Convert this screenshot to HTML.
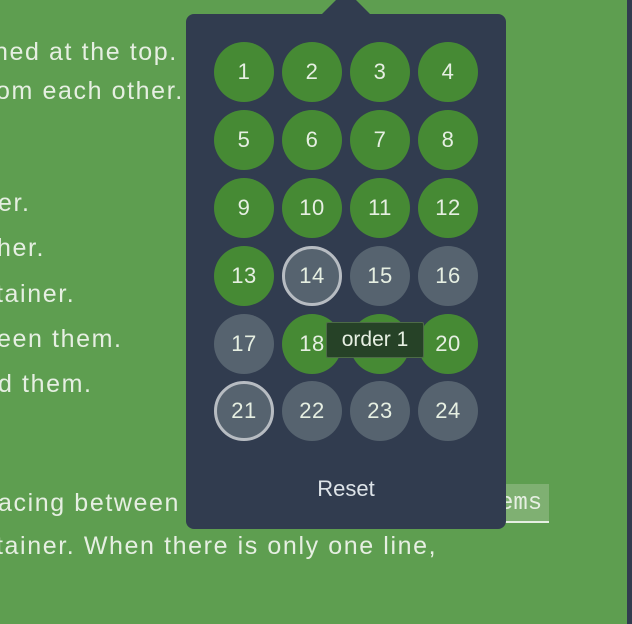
<!DOCTYPE html>
<html><head><meta charset="utf-8"><style>
html,body{margin:0;padding:0}
body{width:632px;height:624px;background:#5e9e50;position:relative;overflow:hidden;font-family:"Liberation Sans",sans-serif;color:#e6efe2}
.t{position:absolute;font-size:25px;letter-spacing:1.6px;white-space:nowrap;line-height:28px}
.strip{position:absolute;right:0;top:0;width:5px;height:624px;background:#313c4f}
.code{position:absolute;left:505px;top:484px;width:44px;height:37px;background:#7fb072;border-bottom:2px solid #e6efe2;font-family:"Liberation Mono",monospace;font-size:24px;line-height:40px;color:#e6efe2;overflow:hidden;text-indent:-6px}
.panel{position:absolute;left:186px;top:14px;width:320px;height:515px;background:#313c4f;border-radius:8px}
.arrow{position:absolute;left:322px;top:-10px;width:0;height:0;border-left:24px solid transparent;border-right:24px solid transparent;border-bottom:24px solid #313c4f}
.c{position:absolute;width:60px;height:60px;border-radius:50%;text-align:center;line-height:60px;font-size:22px;letter-spacing:0.5px;color:#e6efe2;box-sizing:border-box}
.g{background:#468a34}
.s{background:#56636f}
.r{border:3px solid #b7bcc2;line-height:54px}
.tip{position:absolute;left:326px;top:322px;width:98px;height:36px;box-sizing:border-box;background:#264227;border:1px solid #4d6b47;border-radius:2px;font-size:21px;line-height:34px;text-align:center;color:#e6efe2}
.reset{position:absolute;left:186px;width:320px;top:476px;text-align:center;font-size:22px;color:#dde3e8}
</style></head><body>
<div class="t" style="left:-6px;top:38px">hed at the top.</div>
<div class="t" style="left:-4px;top:77px">om each other.</div>
<div class="t" style="left:-2px;top:189px">er.</div>
<div class="t" style="left:-3px;top:234px">her.</div>
<div class="t" style="left:-4px;top:280px">tainer.</div>
<div class="t" style="left:-3px;top:325px">een them.</div>
<div class="t" style="left:-2px;top:370px">d them.</div>
<div class="t" style="left:-2px;top:489px">acing between</div>
<div class="t" style="left:-4px;top:532px">tainer. When there is only one line,</div>
<div class="code">ems</div>
<div class="strip"></div>
<div class="arrow"></div>
<div class="panel"></div>
<div class="c g" style="left:214px;top:42px">1</div>
<div class="c g" style="left:282px;top:42px">2</div>
<div class="c g" style="left:350px;top:42px">3</div>
<div class="c g" style="left:418px;top:42px">4</div>
<div class="c g" style="left:214px;top:110px">5</div>
<div class="c g" style="left:282px;top:110px">6</div>
<div class="c g" style="left:350px;top:110px">7</div>
<div class="c g" style="left:418px;top:110px">8</div>
<div class="c g" style="left:214px;top:178px">9</div>
<div class="c g" style="left:282px;top:178px">10</div>
<div class="c g" style="left:350px;top:178px">11</div>
<div class="c g" style="left:418px;top:178px">12</div>
<div class="c g" style="left:214px;top:246px">13</div>
<div class="c s r" style="left:282px;top:246px">14</div>
<div class="c s" style="left:350px;top:246px">15</div>
<div class="c s" style="left:418px;top:246px">16</div>
<div class="c s" style="left:214px;top:314px">17</div>
<div class="c g" style="left:282px;top:314px">18</div>
<div class="c g" style="left:350px;top:314px">19</div>
<div class="c g" style="left:418px;top:314px">20</div>
<div class="c s r" style="left:214px;top:381px">21</div>
<div class="c s" style="left:282px;top:381px">22</div>
<div class="c s" style="left:350px;top:381px">23</div>
<div class="c s" style="left:418px;top:381px">24</div>
<div class="tip">order 1</div>
<div class="reset">Reset</div>
</body></html>
